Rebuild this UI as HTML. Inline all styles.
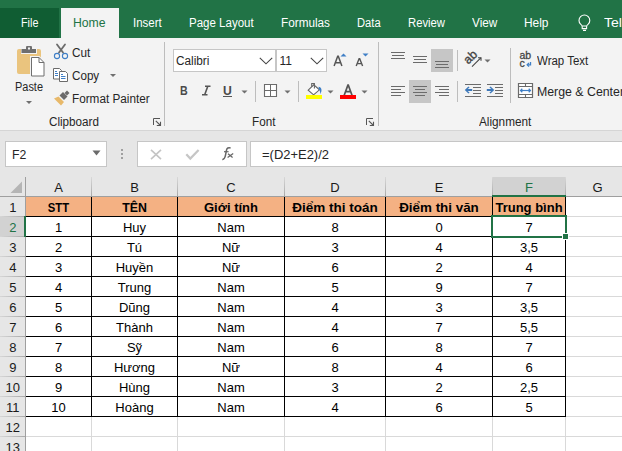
<!DOCTYPE html>
<html><head><meta charset="utf-8"><style>
html,body{margin:0;padding:0;width:622px;height:451px;overflow:hidden;background:#fff;position:relative}
body>div,body>svg{position:absolute;box-sizing:border-box}
.t{white-space:nowrap;line-height:normal;font-family:"Liberation Sans",sans-serif;transform-origin:0 0}
svg{overflow:visible}
</style></head><body>
<div style="left:0px;top:0px;width:622px;height:38px;background:#217346;"></div>
<div style="left:0px;top:8px;width:59px;height:30px;background:#105d33;"></div>
<div style="left:61px;top:8px;width:58px;height:30px;background:#f3f3f3;"></div>
<div class="t" style="left:21px;top:16.14px;font-size:12px;color:#fff;transform:scaleX(0.8998);">File</div>
<div class="t" style="left:73.4px;top:16.14px;font-size:12px;color:#217346;transform:scaleX(1.0184);">Home</div>
<div class="t" style="left:133px;top:16.14px;font-size:12px;color:#fff;transform:scaleX(0.9563);">Insert</div>
<div class="t" style="left:189px;top:16.14px;font-size:12px;color:#fff;transform:scaleX(0.9601);">Page Layout</div>
<div class="t" style="left:281px;top:16.14px;font-size:12px;color:#fff;transform:scaleX(0.9798);">Formulas</div>
<div class="t" style="left:357.2px;top:16.14px;font-size:12px;color:#fff;transform:scaleX(0.9310);">Data</div>
<div class="t" style="left:408px;top:16.14px;font-size:12px;color:#fff;transform:scaleX(0.9404);">Review</div>
<div class="t" style="left:471.5px;top:16.14px;font-size:12px;color:#fff;transform:scaleX(0.9808);">View</div>
<div class="t" style="left:524px;top:16.14px;font-size:12px;color:#fff;transform:scaleX(0.9927);">Help</div>
<div class="t" style="left:604px;top:16.14px;font-size:12px;color:#fff;transform:scaleX(1.1662);">Tell</div>
<svg style="left:576px;top:13px" width="18" height="20" viewBox="0 0 18 20"><path d="M6.2 15.6V13.6C6.2 12.8 5.8 12.2 4.6 11.2A5.4 5.4 0 1 1 12.2 11.2C11 12.2 10.6 12.8 10.6 13.6V15.6Z" fill="none" stroke="#fff" stroke-width="1.1"/><path d="M6.2 13h4.4M7 17.4h3" stroke="#fff" stroke-width="1.1"/></svg>
<div style="left:0px;top:38px;width:622px;height:92px;background:#f3f3f3;"></div>
<div style="left:0px;top:130px;width:622px;height:1px;background:#d5d5d5;"></div>
<div style="left:164px;top:42px;width:1px;height:84px;background:#bdbdbd;"></div>
<div style="left:378px;top:42px;width:1px;height:84px;background:#bdbdbd;"></div>
<svg style="left:14px;top:44px" width="34" height="34" viewBox="0 0 34 34">
<rect x="3" y="5" width="24" height="25" rx="2" fill="#eac47e"/>
<rect x="7" y="4" width="16" height="6" fill="#f3f3f3"/>
<rect x="7.5" y="5" width="14.5" height="4" fill="#6f6f6f"/>
<rect x="12" y="2" width="6" height="4" rx="1" fill="#6f6f6f"/>
<rect x="14" y="3.5" width="2" height="2" fill="#f3f3f3"/>
<path d="M16 12h9.5l5.5 5.5V33H16z" fill="#f3f3f3"/>
<path d="M17.5 13.5h7.5l5 5V32h-12.5z" fill="#fff" stroke="#6f6f6f" stroke-width="1"/>
<path d="M25 13.5v5h5" fill="none" stroke="#6f6f6f" stroke-width="1"/>
</svg>
<div class="t" style="left:15.3px;top:79.74px;font-size:12px;color:#262626;transform:scaleX(0.9125);">Paste</div>
<svg style="left:25px;top:100px" width="8" height="5"><path d="M1 1h6l-3 3z" fill="#6f6f6f"/></svg>
<svg style="left:52px;top:42px" width="18" height="18" viewBox="0 0 18 18">
<path d="M5 2.5 L11 10.5 M13 2.5 L7 10.5" stroke="#6b6b6b" stroke-width="1.8" stroke-linecap="round"/>
<circle cx="5" cy="14" r="2.6" fill="none" stroke="#3f7fc6" stroke-width="1.1"/>
<circle cx="13" cy="14" r="2.6" fill="none" stroke="#3f7fc6" stroke-width="1.1"/>
</svg>
<div class="t" style="left:72.3px;top:45.94px;font-size:12px;color:#262626;transform:scaleX(0.9800);">Cut</div>
<svg style="left:52px;top:66px" width="18" height="18" viewBox="0 0 18 18">
<path d="M1.5 2.5h6l2 2V13h-8z" fill="#fff" stroke="#6b6b6b" stroke-width="1"/>
<path d="M7.5 5.5h6l2 2V15.5h-8z" fill="#fff" stroke="#6b6b6b" stroke-width="1"/>
<path d="M3 5.5h2M3 7.5h3M3 9.5h3" stroke="#3f7fc6" stroke-width="1"/>
<path d="M9 8.5h2M9 10.5h4.5M9 12.5h4.5" stroke="#3f7fc6" stroke-width="1"/>
</svg>
<div class="t" style="left:72.3px;top:68.74px;font-size:12px;color:#262626;transform:scaleX(0.9709);">Copy</div>
<svg style="left:109px;top:73px" width="8" height="5"><path d="M1 1h6l-3 3z" fill="#6f6f6f"/></svg>
<svg style="left:52.7px;top:89.6px" width="18" height="17" viewBox="0 0 18 17">
<path d="M1 8.5 L5.5 6.5 L11 12 L8 15.5 Z" fill="#e8b96a"/>
<path d="M6.5 5.5 L10 2 L14.5 6.5 L11 10 Z" fill="#6b6b6b"/>
<path d="M11.5 3 L14 0.5 L16.5 3 L14 5.5 Z" fill="#6b6b6b"/>
</svg>
<div class="t" style="left:72.3px;top:91.74px;font-size:12px;color:#262626;transform:scaleX(0.9791);">Format Painter</div>
<div class="t" style="left:48.6px;top:115.14px;font-size:12px;color:#262626;transform:scaleX(0.9715);">Clipboard</div>
<svg style="left:153px;top:118px" width="8" height="8" viewBox="0 0 8 8"><path d="M0.5 7V0.5H7" fill="none" stroke="#555" stroke-width="1"/><path d="M2.8 2.8L7 7M3.8 7.5H7.5V3.8" fill="none" stroke="#555" stroke-width="1.1"/></svg>
<svg style="left:366px;top:118px" width="8" height="8" viewBox="0 0 8 8"><path d="M0.5 7V0.5H7" fill="none" stroke="#555" stroke-width="1"/><path d="M2.8 2.8L7 7M3.8 7.5H7.5V3.8" fill="none" stroke="#555" stroke-width="1.1"/></svg>
<div style="left:173px;top:49px;width:154px;height:23px;background:#c6c6c6;"></div>
<div style="left:174px;top:50px;width:101px;height:21px;background:#fff;"></div>
<div style="left:277px;top:50px;width:49px;height:21px;background:#fff;"></div>
<div class="t" style="left:176.4px;top:53.84px;font-size:12px;color:#262626;transform:scaleX(0.9821);">Calibri</div>
<div class="t" style="left:279.5px;top:53.84px;font-size:12px;color:#262626;">11</div>
<svg style="left:259px;top:56.8px" width="14" height="8" viewBox="0 0 14 8"><path d="M0.8 0.8L7 6.8L13.2 0.8" fill="none" stroke="#444" stroke-width="1.1"/></svg>
<svg style="left:310px;top:56.8px" width="14" height="8" viewBox="0 0 14 8"><path d="M0.8 0.8L7 6.8L13.2 0.8" fill="none" stroke="#444" stroke-width="1.1"/></svg>
<svg style="left:333px;top:55px" width="11" height="12" viewBox="0 0 11 12"><path d="M1.1 11L4.7 1.3h0.6L8.9 11M2.6 7.8h4.8" fill="none" stroke="#555" stroke-width="1.5"/></svg>
<svg style="left:340px;top:53px" width="7" height="4"><path d="M0.5 3.5L3.5 0.5L6.5 3.5z" fill="#3f7fc6"/></svg>
<svg style="left:355px;top:58px" width="10" height="9" viewBox="0 0 10 9"><path d="M1.2 8L4.1 0.8h0.6L7.6 8M2.4 5.6h4" fill="none" stroke="#555" stroke-width="1.4"/></svg>
<svg style="left:362px;top:53px" width="7" height="4"><path d="M0.5 0.5L3.5 3.5L6.5 0.5z" fill="#3f7fc6"/></svg>
<div class="t" style="left:179.5px;top:83.69px;font-size:12.5px;color:#4a4a4a;font-weight:bold;transform:scaleX(0.8530);">B</div>
<svg style="left:201px;top:85px" width="10" height="11" viewBox="0 0 10 11"><path d="M4 1.3h5.5M1 9.7h5.5M6.8 1.3L3.7 9.7" stroke="#555" stroke-width="1.6" fill="none"/></svg>
<div class="t" style="left:223.3px;top:84.14px;font-size:12px;color:#4a4a4a;font-weight:bold;transform:scaleX(1.0154);">U</div>
<div style="left:223px;top:96px;width:9px;height:1px;background:#555;"></div>
<svg style="left:241px;top:89.5px" width="7" height="5"><path d="M0.5 0.5h6l-3 3z" fill="#6f6f6f"/></svg>
<div style="left:255px;top:81px;width:1px;height:21px;background:#bdbdbd;"></div>
<svg style="left:264px;top:84px" width="14" height="14" viewBox="0 0 14 14"><path d="M0.5 0.5h12v12h-12z" fill="#fff" stroke="#6b6b6b" stroke-width="1.1"/><path d="M6.5 0.5v12M0.5 6.5h12" fill="none" stroke="#6b6b6b" stroke-width="1"/></svg>
<svg style="left:284px;top:89.5px" width="7" height="5"><path d="M0.5 0.5h6l-3 3z" fill="#6f6f6f"/></svg>
<div style="left:298px;top:81px;width:1px;height:21px;background:#bdbdbd;"></div>
<svg style="left:305px;top:82px" width="18" height="17" viewBox="0 0 18 17">
<path d="M3.2 8.2 L8.8 2.8 L14.4 7.8 L8.6 12.8 Z" fill="#fff" stroke="#666" stroke-width="1.1"/>
<path d="M6.7 4.8V1.5H9.4V6.6" fill="none" stroke="#666" stroke-width="1.1"/>
<path d="M13.6 4.8C16.6 5.2 17.6 8.4 15.2 12.2C15.4 9.6 14.8 8.2 13.8 7.2z" fill="#3f7fc6"/>
<rect x="1" y="13" width="16" height="4" fill="#ffff00"/>
</svg>
<svg style="left:327px;top:89.5px" width="7" height="5"><path d="M0.5 0.5h6l-3 3z" fill="#6f6f6f"/></svg>
<svg style="left:340px;top:83px" width="16" height="16" viewBox="0 0 16 16"><path d="M4.2 12.3L7.9 2.2h0.4L12 12.3M5.6 8.6h5.2" fill="none" stroke="#555" stroke-width="1.7"/><rect x="0" y="12" width="16" height="4" fill="#ff0000"/></svg>
<svg style="left:361px;top:89.5px" width="7" height="5"><path d="M0.5 0.5h6l-3 3z" fill="#6f6f6f"/></svg>
<div style="left:431px;top:49px;width:22px;height:23px;background:#c6c6c6;"></div>
<div style="left:409px;top:80px;width:22px;height:23px;background:#c6c6c6;"></div>
<div style="left:391px;top:52px;width:14px;height:1px;background:#6b6b6b;"></div>
<div style="left:392px;top:55px;width:12px;height:1px;background:#6b6b6b;"></div>
<div style="left:391px;top:58px;width:14px;height:1px;background:#6b6b6b;"></div>
<div style="left:413px;top:56px;width:14px;height:1px;background:#6b6b6b;"></div>
<div style="left:414px;top:59px;width:12px;height:1px;background:#6b6b6b;"></div>
<div style="left:413px;top:62px;width:14px;height:1px;background:#6b6b6b;"></div>
<div style="left:435px;top:61px;width:14px;height:1px;background:#6b6b6b;"></div>
<div style="left:436px;top:64px;width:12px;height:1px;background:#6b6b6b;"></div>
<div style="left:435px;top:67px;width:14px;height:1px;background:#6b6b6b;"></div>
<div style="left:391px;top:86px;width:14px;height:1px;background:#6b6b6b;"></div>
<div style="left:391px;top:89px;width:10px;height:1px;background:#6b6b6b;"></div>
<div style="left:391px;top:92px;width:14px;height:1px;background:#6b6b6b;"></div>
<div style="left:391px;top:95px;width:10px;height:1px;background:#6b6b6b;"></div>
<div style="left:413px;top:86px;width:14px;height:1px;background:#6b6b6b;"></div>
<div style="left:415px;top:89px;width:10px;height:1px;background:#6b6b6b;"></div>
<div style="left:413px;top:92px;width:14px;height:1px;background:#6b6b6b;"></div>
<div style="left:415px;top:95px;width:10px;height:1px;background:#6b6b6b;"></div>
<div style="left:435px;top:86px;width:14px;height:1px;background:#6b6b6b;"></div>
<div style="left:439px;top:89px;width:10px;height:1px;background:#6b6b6b;"></div>
<div style="left:435px;top:92px;width:14px;height:1px;background:#6b6b6b;"></div>
<div style="left:439px;top:95px;width:10px;height:1px;background:#6b6b6b;"></div>
<div style="left:457px;top:50px;width:1px;height:21px;background:#bdbdbd;"></div>
<div style="left:457px;top:81px;width:1px;height:21px;background:#bdbdbd;"></div>
<svg style="left:462px;top:48px" width="24" height="20" viewBox="0 0 24 20">
<text x="0" y="0" transform="translate(6.3,16.8) rotate(-45)" font-family="Liberation Sans" font-size="12.3" fill="#444" stroke="#444" stroke-width="0.35">ab</text>
<path d="M10 18.6 L18.8 9.9" stroke="#444" stroke-width="1.1"/>
<path d="M16 9.7 L19 9.7 L19 12.7" stroke="#444" stroke-width="1.1" fill="none"/>
</svg>
<svg style="left:484px;top:58.5px" width="7" height="5"><path d="M0.5 0.5h6l-3 3z" fill="#6f6f6f"/></svg>
<div style="left:465px;top:84px;width:16px;height:1px;background:#6b6b6b;"></div>
<div style="left:465px;top:96px;width:16px;height:1px;background:#6b6b6b;"></div>
<div style="left:473px;top:87px;width:8px;height:1px;background:#6b6b6b;"></div>
<div style="left:473px;top:90px;width:8px;height:1px;background:#6b6b6b;"></div>
<div style="left:473px;top:93px;width:8px;height:1px;background:#6b6b6b;"></div>
<svg style="left:464px;top:86px" width="9" height="8" viewBox="0 0 9 8"><path d="M0.8 4L4.4 0.6L5.6 1.5L3.6 3H8.2V5H3.6L5.6 6.5L4.4 7.4Z" fill="#3d78ba"/></svg>
<div style="left:487px;top:84px;width:16px;height:1px;background:#6b6b6b;"></div>
<div style="left:487px;top:96px;width:16px;height:1px;background:#6b6b6b;"></div>
<div style="left:495px;top:87px;width:8px;height:1px;background:#6b6b6b;"></div>
<div style="left:495px;top:90px;width:8px;height:1px;background:#6b6b6b;"></div>
<div style="left:495px;top:93px;width:8px;height:1px;background:#6b6b6b;"></div>
<svg style="left:485.5px;top:86px" width="9" height="8" viewBox="0 0 9 8"><path d="M8.2 4L4.6 0.6L3.4 1.5L5.4 3H0.8V5H5.4L3.4 6.5L4.6 7.4Z" fill="#3d78ba"/></svg>
<div style="left:510px;top:48px;width:1px;height:55px;background:#bdbdbd;"></div>
<svg style="left:519px;top:50px" width="16" height="18" viewBox="0 0 16 18">
<text x="0.5" y="9.4" font-family="Liberation Sans" font-size="10.5" fill="#444" stroke="#444" stroke-width="0.3">ab</text>
<text x="0.5" y="16.8" font-family="Liberation Sans" font-size="10.5" fill="#444" stroke="#444" stroke-width="0.3">c</text>
<path d="M11.5 12v2.8h-3" stroke="#3f7fc6" stroke-width="1.3" fill="none"/><path d="M10 13l-1.8 1.8L10 16.6" stroke="#3f7fc6" stroke-width="1.3" fill="none"/>
</svg>
<div class="t" style="left:537.4px;top:53.94px;font-size:12px;color:#262626;transform:scaleX(0.9575);">Wrap Text</div>
<svg style="left:518px;top:83px" width="16" height="16" viewBox="0 0 16 16">
<path d="M0.5 0.5h14v14h-14z" fill="#fff" stroke="#6b6b6b" stroke-width="1.2"/>
<path d="M0.5 3.5h14M0.5 11.5h14M7.5 0.5v3M7.5 11.5v3" stroke="#6b6b6b" stroke-width="1.1"/>
<path d="M3 7.5h9" stroke="#3f7fc6" stroke-width="1.2"/><path d="M4.3 5.8L2.6 7.5l1.7 1.7M10.7 5.8l1.7 1.7-1.7 1.7" stroke="#3f7fc6" stroke-width="1.3" fill="none"/>
</svg>
<div class="t" style="left:537.4px;top:85.14px;font-size:12px;color:#262626;transform:scaleX(1.0271);">Merge &amp; Center</div>
<div class="t" style="left:251.6px;top:115.14px;font-size:12px;color:#262626;transform:scaleX(0.9745);">Font</div>
<div class="t" style="left:479.2px;top:115.14px;font-size:12px;color:#262626;transform:scaleX(0.9801);">Alignment</div>
<div style="left:0px;top:131px;width:622px;height:46px;background:#e6e6e6;"></div>
<div style="left:5px;top:141px;width:102px;height:26px;background:#c6c6c6;"></div>
<div style="left:6px;top:142px;width:100px;height:24px;background:#fff;"></div>
<div class="t" style="left:12.4px;top:147.69px;font-size:12.5px;color:#262626;transform:scaleX(0.9803);">F2</div>
<svg style="left:92px;top:150px" width="9" height="6"><path d="M0.5 0.5h8l-4 5z" fill="#6b6b6b"/></svg>
<div style="left:121px;top:149px;width:2px;height:2px;background:#a0a0a0;"></div>
<div style="left:121px;top:153px;width:2px;height:2px;background:#a0a0a0;"></div>
<div style="left:121px;top:157px;width:2px;height:2px;background:#a0a0a0;"></div>
<div style="left:137px;top:141px;width:110px;height:26px;background:#c6c6c6;"></div>
<div style="left:138px;top:142px;width:108px;height:24px;background:#fff;"></div>
<svg style="left:150px;top:149px" width="12" height="11" viewBox="0 0 12 11"><path d="M1 0.8L11 10.2M11 0.8L1 10.2" stroke="#c4c4c4" stroke-width="1.6"/></svg>
<svg style="left:185px;top:149px" width="15" height="11" viewBox="0 0 15 11"><path d="M1.3 5.3L5.3 9.6L13.6 1" stroke="#c6c6c6" stroke-width="2.2" fill="none"/></svg>
<svg style="left:215px;top:143px" width="25" height="22" viewBox="0 0 25 22"><path d="M7.3 16.4C9.3 16.6 10 15 10.5 12.2L11.5 7.2C12 5 13.2 4.3 15.6 4.9" stroke="#666" stroke-width="1.5" fill="none"/><path d="M9 8.7h4.6" stroke="#666" stroke-width="1.2"/><path d="M13 10.7L17.6 14.4M18.2 10.6L12.6 14.6" stroke="#666" stroke-width="1.25"/></svg>
<div style="left:250px;top:141px;width:380px;height:26px;background:#c6c6c6;"></div>
<div style="left:251px;top:142px;width:380px;height:24px;background:#fff;"></div>
<div class="t" style="left:262px;top:147.69px;font-size:12.5px;color:#262626;transform:scaleX(1.0368);">=(D2+E2)/2</div>
<div style="left:0px;top:177px;width:622px;height:19px;background:#e6e6e6;"></div>
<div style="left:492px;top:177px;width:73px;height:18px;background:#d2d2d2;"></div>
<div style="left:91px;top:177px;width:1px;height:19px;background:linear-gradient(#d8d8d8,#a9a9a9);"></div>
<div style="left:177px;top:177px;width:1px;height:19px;background:linear-gradient(#d8d8d8,#a9a9a9);"></div>
<div style="left:284px;top:177px;width:1px;height:19px;background:linear-gradient(#d8d8d8,#a9a9a9);"></div>
<div style="left:385px;top:177px;width:1px;height:19px;background:linear-gradient(#d8d8d8,#a9a9a9);"></div>
<div style="left:492px;top:177px;width:1px;height:19px;background:linear-gradient(#d8d8d8,#a9a9a9);"></div>
<div style="left:565px;top:177px;width:1px;height:19px;background:linear-gradient(#d8d8d8,#a9a9a9);"></div>
<div style="left:0px;top:196px;width:622px;height:1px;background:#9f9f9f;"></div>
<div style="left:492px;top:195px;width:74px;height:2px;background:#217346;"></div>
<div style="left:25px;top:177px;width:1px;height:274px;background:#9f9f9f;"></div>
<svg style="left:10px;top:181px" width="13" height="13"><path d="M12 0.5V12H0.5z" fill="#b5b5b5"/></svg>
<div class="t" style="left:26px;top:180.24px;width:65px;text-align:center;font-size:13px;color:#1a1a1a;">A</div>
<div class="t" style="left:92px;top:180.24px;width:85px;text-align:center;font-size:13px;color:#1a1a1a;">B</div>
<div class="t" style="left:178px;top:180.24px;width:106px;text-align:center;font-size:13px;color:#1a1a1a;">C</div>
<div class="t" style="left:285px;top:180.24px;width:100px;text-align:center;font-size:13px;color:#1a1a1a;">D</div>
<div class="t" style="left:386px;top:180.24px;width:106px;text-align:center;font-size:13px;color:#1a1a1a;">E</div>
<div class="t" style="left:493px;top:180.24px;width:72px;text-align:center;font-size:13px;color:#217346;">F</div>
<div class="t" style="left:566px;top:180.24px;width:63px;text-align:center;font-size:13px;color:#1a1a1a;">G</div>
<div style="left:26px;top:197px;width:596px;height:254px;background:#fff;"></div>
<div style="left:26px;top:216px;width:596px;height:1px;background:#d9d9d9;"></div>
<div style="left:26px;top:236px;width:596px;height:1px;background:#d9d9d9;"></div>
<div style="left:26px;top:256px;width:596px;height:1px;background:#d9d9d9;"></div>
<div style="left:26px;top:276px;width:596px;height:1px;background:#d9d9d9;"></div>
<div style="left:26px;top:296px;width:596px;height:1px;background:#d9d9d9;"></div>
<div style="left:26px;top:316px;width:596px;height:1px;background:#d9d9d9;"></div>
<div style="left:26px;top:336px;width:596px;height:1px;background:#d9d9d9;"></div>
<div style="left:26px;top:356px;width:596px;height:1px;background:#d9d9d9;"></div>
<div style="left:26px;top:376px;width:596px;height:1px;background:#d9d9d9;"></div>
<div style="left:26px;top:396px;width:596px;height:1px;background:#d9d9d9;"></div>
<div style="left:26px;top:416px;width:596px;height:1px;background:#d9d9d9;"></div>
<div style="left:26px;top:436px;width:596px;height:1px;background:#d9d9d9;"></div>
<div style="left:91px;top:197px;width:1px;height:254px;background:#d9d9d9;"></div>
<div style="left:177px;top:197px;width:1px;height:254px;background:#d9d9d9;"></div>
<div style="left:284px;top:197px;width:1px;height:254px;background:#d9d9d9;"></div>
<div style="left:385px;top:197px;width:1px;height:254px;background:#d9d9d9;"></div>
<div style="left:492px;top:197px;width:1px;height:254px;background:#d9d9d9;"></div>
<div style="left:565px;top:197px;width:1px;height:254px;background:#d9d9d9;"></div>
<div style="left:0px;top:197px;width:25px;height:254px;background:#e6e6e6;"></div>
<div style="left:0px;top:216px;width:25px;height:21px;background:#d2d2d2;"></div>
<div style="left:0px;top:216px;width:25px;height:1px;background:linear-gradient(to right,#d6d6d6,#a9a9a9);"></div>
<div class="t" style="left:0.5px;top:200.24px;width:24.5px;text-align:center;font-size:13px;color:#1a1a1a;">1</div>
<div style="left:0px;top:236px;width:25px;height:1px;background:linear-gradient(to right,#d6d6d6,#a9a9a9);"></div>
<div class="t" style="left:0.5px;top:220.24px;width:24.5px;text-align:center;font-size:13px;color:#217346;">2</div>
<div style="left:0px;top:256px;width:25px;height:1px;background:linear-gradient(to right,#d6d6d6,#a9a9a9);"></div>
<div class="t" style="left:0.5px;top:240.24px;width:24.5px;text-align:center;font-size:13px;color:#1a1a1a;">3</div>
<div style="left:0px;top:276px;width:25px;height:1px;background:linear-gradient(to right,#d6d6d6,#a9a9a9);"></div>
<div class="t" style="left:0.5px;top:260.24px;width:24.5px;text-align:center;font-size:13px;color:#1a1a1a;">4</div>
<div style="left:0px;top:296px;width:25px;height:1px;background:linear-gradient(to right,#d6d6d6,#a9a9a9);"></div>
<div class="t" style="left:0.5px;top:280.24px;width:24.5px;text-align:center;font-size:13px;color:#1a1a1a;">5</div>
<div style="left:0px;top:316px;width:25px;height:1px;background:linear-gradient(to right,#d6d6d6,#a9a9a9);"></div>
<div class="t" style="left:0.5px;top:300.24px;width:24.5px;text-align:center;font-size:13px;color:#1a1a1a;">6</div>
<div style="left:0px;top:336px;width:25px;height:1px;background:linear-gradient(to right,#d6d6d6,#a9a9a9);"></div>
<div class="t" style="left:0.5px;top:320.24px;width:24.5px;text-align:center;font-size:13px;color:#1a1a1a;">7</div>
<div style="left:0px;top:356px;width:25px;height:1px;background:linear-gradient(to right,#d6d6d6,#a9a9a9);"></div>
<div class="t" style="left:0.5px;top:340.24px;width:24.5px;text-align:center;font-size:13px;color:#1a1a1a;">8</div>
<div style="left:0px;top:376px;width:25px;height:1px;background:linear-gradient(to right,#d6d6d6,#a9a9a9);"></div>
<div class="t" style="left:0.5px;top:360.24px;width:24.5px;text-align:center;font-size:13px;color:#1a1a1a;">9</div>
<div style="left:0px;top:396px;width:25px;height:1px;background:linear-gradient(to right,#d6d6d6,#a9a9a9);"></div>
<div class="t" style="left:0.5px;top:380.24px;width:24.5px;text-align:center;font-size:13px;color:#1a1a1a;">10</div>
<div style="left:0px;top:416px;width:25px;height:1px;background:linear-gradient(to right,#d6d6d6,#a9a9a9);"></div>
<div class="t" style="left:0.5px;top:400.24px;width:24.5px;text-align:center;font-size:13px;color:#1a1a1a;">11</div>
<div style="left:0px;top:436px;width:25px;height:1px;background:linear-gradient(to right,#d6d6d6,#a9a9a9);"></div>
<div class="t" style="left:0.5px;top:420.24px;width:24.5px;text-align:center;font-size:13px;color:#1a1a1a;">12</div>
<div style="left:0px;top:456px;width:25px;height:1px;background:linear-gradient(to right,#d6d6d6,#a9a9a9);"></div>
<div class="t" style="left:0.5px;top:440.24px;width:24.5px;text-align:center;font-size:13px;color:#1a1a1a;">13</div>
<div style="left:24px;top:216px;width:2px;height:21px;background:#217346;"></div>
<div style="left:26px;top:197px;width:539px;height:19px;background:#f4b183;"></div>
<div style="left:26px;top:216px;width:540px;height:1px;background:#000;"></div>
<div style="left:26px;top:236px;width:540px;height:1px;background:#000;"></div>
<div style="left:26px;top:256px;width:540px;height:1px;background:#000;"></div>
<div style="left:26px;top:276px;width:540px;height:1px;background:#000;"></div>
<div style="left:26px;top:296px;width:540px;height:1px;background:#000;"></div>
<div style="left:26px;top:316px;width:540px;height:1px;background:#000;"></div>
<div style="left:26px;top:336px;width:540px;height:1px;background:#000;"></div>
<div style="left:26px;top:356px;width:540px;height:1px;background:#000;"></div>
<div style="left:26px;top:376px;width:540px;height:1px;background:#000;"></div>
<div style="left:26px;top:396px;width:540px;height:1px;background:#000;"></div>
<div style="left:26px;top:416px;width:540px;height:1px;background:#000;"></div>
<div style="left:91px;top:197px;width:1px;height:220px;background:#000;"></div>
<div style="left:177px;top:197px;width:1px;height:220px;background:#000;"></div>
<div style="left:284px;top:197px;width:1px;height:220px;background:#000;"></div>
<div style="left:385px;top:197px;width:1px;height:220px;background:#000;"></div>
<div style="left:492px;top:197px;width:1px;height:220px;background:#000;"></div>
<div style="left:565px;top:197px;width:1px;height:220px;background:#000;"></div>
<div class="t" style="left:26px;top:200.24px;width:65px;text-align:center;font-size:13px;color:#000;font-weight:bold;transform:scaleX(0.870);transform-origin:50% 0;">STT</div>
<div class="t" style="left:92px;top:200.24px;width:85px;text-align:center;font-size:13px;color:#000;font-weight:bold;transform:scaleX(0.950);transform-origin:50% 0;">TÊN</div>
<div class="t" style="left:178px;top:200.24px;width:106px;text-align:center;font-size:13px;color:#000;font-weight:bold;">Giới tính</div>
<div class="t" style="left:285px;top:200.24px;width:100px;text-align:center;font-size:13px;color:#000;font-weight:bold;transform:scaleX(1.040);transform-origin:50% 0;">Điểm thi toán</div>
<div class="t" style="left:386px;top:200.24px;width:106px;text-align:center;font-size:13px;color:#000;font-weight:bold;transform:scaleX(1.030);transform-origin:50% 0;">Điểm thi văn</div>
<div class="t" style="left:493px;top:200.24px;width:72px;text-align:center;font-size:13px;color:#000;font-weight:bold;">Trung bình</div>
<div class="t" style="left:26px;top:220.24px;width:65px;text-align:center;font-size:13px;color:#000;">1</div>
<div class="t" style="left:92px;top:220.24px;width:85px;text-align:center;font-size:13px;color:#000;">Huy</div>
<div class="t" style="left:178px;top:220.24px;width:106px;text-align:center;font-size:13px;color:#000;">Nam</div>
<div class="t" style="left:285px;top:220.24px;width:100px;text-align:center;font-size:13px;color:#000;">8</div>
<div class="t" style="left:386px;top:220.24px;width:106px;text-align:center;font-size:13px;color:#000;">0</div>
<div class="t" style="left:493px;top:220.24px;width:72px;text-align:center;font-size:13px;color:#000;">7</div>
<div class="t" style="left:26px;top:240.24px;width:65px;text-align:center;font-size:13px;color:#000;">2</div>
<div class="t" style="left:92px;top:240.24px;width:85px;text-align:center;font-size:13px;color:#000;">Tú</div>
<div class="t" style="left:178px;top:240.24px;width:106px;text-align:center;font-size:13px;color:#000;">Nữ</div>
<div class="t" style="left:285px;top:240.24px;width:100px;text-align:center;font-size:13px;color:#000;">3</div>
<div class="t" style="left:386px;top:240.24px;width:106px;text-align:center;font-size:13px;color:#000;">4</div>
<div class="t" style="left:493px;top:240.24px;width:72px;text-align:center;font-size:13px;color:#000;">3,5</div>
<div class="t" style="left:26px;top:260.24px;width:65px;text-align:center;font-size:13px;color:#000;">3</div>
<div class="t" style="left:92px;top:260.24px;width:85px;text-align:center;font-size:13px;color:#000;">Huyền</div>
<div class="t" style="left:178px;top:260.24px;width:106px;text-align:center;font-size:13px;color:#000;">Nữ</div>
<div class="t" style="left:285px;top:260.24px;width:100px;text-align:center;font-size:13px;color:#000;">6</div>
<div class="t" style="left:386px;top:260.24px;width:106px;text-align:center;font-size:13px;color:#000;">2</div>
<div class="t" style="left:493px;top:260.24px;width:72px;text-align:center;font-size:13px;color:#000;">4</div>
<div class="t" style="left:26px;top:280.24px;width:65px;text-align:center;font-size:13px;color:#000;">4</div>
<div class="t" style="left:92px;top:280.24px;width:85px;text-align:center;font-size:13px;color:#000;">Trung</div>
<div class="t" style="left:178px;top:280.24px;width:106px;text-align:center;font-size:13px;color:#000;">Nam</div>
<div class="t" style="left:285px;top:280.24px;width:100px;text-align:center;font-size:13px;color:#000;">5</div>
<div class="t" style="left:386px;top:280.24px;width:106px;text-align:center;font-size:13px;color:#000;">9</div>
<div class="t" style="left:493px;top:280.24px;width:72px;text-align:center;font-size:13px;color:#000;">7</div>
<div class="t" style="left:26px;top:300.24px;width:65px;text-align:center;font-size:13px;color:#000;">5</div>
<div class="t" style="left:92px;top:300.24px;width:85px;text-align:center;font-size:13px;color:#000;">Dũng</div>
<div class="t" style="left:178px;top:300.24px;width:106px;text-align:center;font-size:13px;color:#000;">Nam</div>
<div class="t" style="left:285px;top:300.24px;width:100px;text-align:center;font-size:13px;color:#000;">4</div>
<div class="t" style="left:386px;top:300.24px;width:106px;text-align:center;font-size:13px;color:#000;">3</div>
<div class="t" style="left:493px;top:300.24px;width:72px;text-align:center;font-size:13px;color:#000;">3,5</div>
<div class="t" style="left:26px;top:320.24px;width:65px;text-align:center;font-size:13px;color:#000;">6</div>
<div class="t" style="left:92px;top:320.24px;width:85px;text-align:center;font-size:13px;color:#000;">Thành</div>
<div class="t" style="left:178px;top:320.24px;width:106px;text-align:center;font-size:13px;color:#000;">Nam</div>
<div class="t" style="left:285px;top:320.24px;width:100px;text-align:center;font-size:13px;color:#000;">4</div>
<div class="t" style="left:386px;top:320.24px;width:106px;text-align:center;font-size:13px;color:#000;">7</div>
<div class="t" style="left:493px;top:320.24px;width:72px;text-align:center;font-size:13px;color:#000;">5,5</div>
<div class="t" style="left:26px;top:340.24px;width:65px;text-align:center;font-size:13px;color:#000;">7</div>
<div class="t" style="left:92px;top:340.24px;width:85px;text-align:center;font-size:13px;color:#000;">Sỹ</div>
<div class="t" style="left:178px;top:340.24px;width:106px;text-align:center;font-size:13px;color:#000;">Nam</div>
<div class="t" style="left:285px;top:340.24px;width:100px;text-align:center;font-size:13px;color:#000;">6</div>
<div class="t" style="left:386px;top:340.24px;width:106px;text-align:center;font-size:13px;color:#000;">8</div>
<div class="t" style="left:493px;top:340.24px;width:72px;text-align:center;font-size:13px;color:#000;">7</div>
<div class="t" style="left:26px;top:360.24px;width:65px;text-align:center;font-size:13px;color:#000;">8</div>
<div class="t" style="left:92px;top:360.24px;width:85px;text-align:center;font-size:13px;color:#000;">Hương</div>
<div class="t" style="left:178px;top:360.24px;width:106px;text-align:center;font-size:13px;color:#000;">Nữ</div>
<div class="t" style="left:285px;top:360.24px;width:100px;text-align:center;font-size:13px;color:#000;">8</div>
<div class="t" style="left:386px;top:360.24px;width:106px;text-align:center;font-size:13px;color:#000;">4</div>
<div class="t" style="left:493px;top:360.24px;width:72px;text-align:center;font-size:13px;color:#000;">6</div>
<div class="t" style="left:26px;top:380.24px;width:65px;text-align:center;font-size:13px;color:#000;">9</div>
<div class="t" style="left:92px;top:380.24px;width:85px;text-align:center;font-size:13px;color:#000;">Hùng</div>
<div class="t" style="left:178px;top:380.24px;width:106px;text-align:center;font-size:13px;color:#000;">Nam</div>
<div class="t" style="left:285px;top:380.24px;width:100px;text-align:center;font-size:13px;color:#000;">3</div>
<div class="t" style="left:386px;top:380.24px;width:106px;text-align:center;font-size:13px;color:#000;">2</div>
<div class="t" style="left:493px;top:380.24px;width:72px;text-align:center;font-size:13px;color:#000;">2,5</div>
<div class="t" style="left:26px;top:400.24px;width:65px;text-align:center;font-size:13px;color:#000;">10</div>
<div class="t" style="left:92px;top:400.24px;width:85px;text-align:center;font-size:13px;color:#000;">Hoàng</div>
<div class="t" style="left:178px;top:400.24px;width:106px;text-align:center;font-size:13px;color:#000;">Nam</div>
<div class="t" style="left:285px;top:400.24px;width:100px;text-align:center;font-size:13px;color:#000;">4</div>
<div class="t" style="left:386px;top:400.24px;width:106px;text-align:center;font-size:13px;color:#000;">6</div>
<div class="t" style="left:493px;top:400.24px;width:72px;text-align:center;font-size:13px;color:#000;">5</div>
<div style="left:491px;top:215px;width:76px;height:23px;border:2px solid #217346;background:transparent"></div>
<div style="left:562px;top:233px;width:7px;height:7px;background:#fff;"></div>
<div style="left:563px;top:234px;width:5px;height:5px;background:#217346;"></div>
</body></html>
